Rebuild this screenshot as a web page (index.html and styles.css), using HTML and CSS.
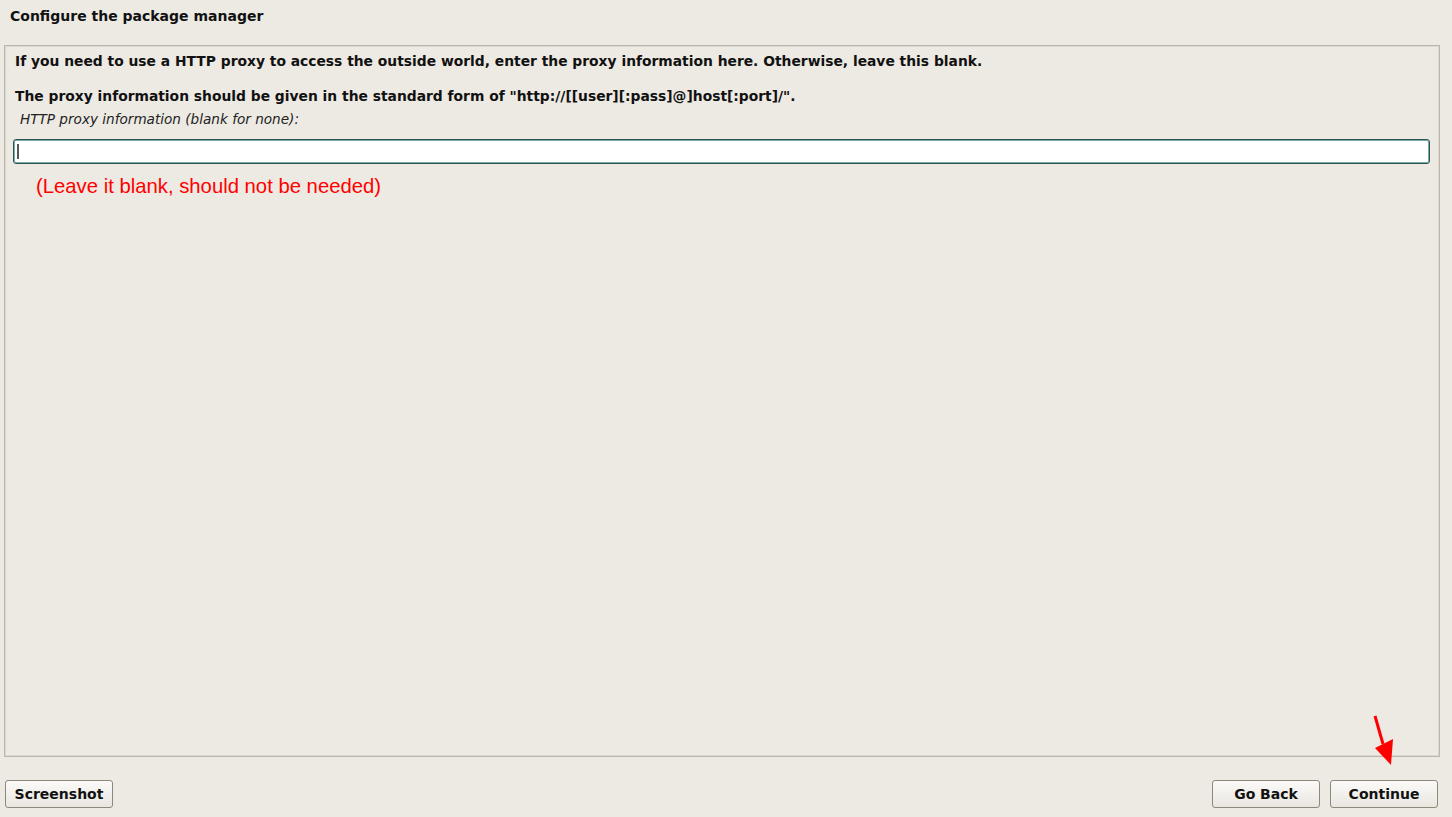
FILE: index.html
```html
<!DOCTYPE html>
<html lang="en">
<head>
    <meta charset="UTF-8">
    <title>Configure the package manager</title>
    <link rel="stylesheet" href="styles.css">
</head>
<body>

    <!-- title -->
    <div class="title">Configure the package manager</div>

    <!-- main panel -->
    <div class="panel">
        <p class="text">If you need to use a HTTP proxy to access the outside world, enter the proxy information here. Otherwise, leave this blank.</p>
        <p class="text second">The proxy information should be given in the standard form of "http://[[user][:pass]@]host[:port]/".</p>
        <div class="label">HTTP proxy information (blank for none):</div>
        <div class="entry"><span class="caret"></span></div>
        <div class="note">(Leave it blank, should not be needed)</div>
    </div>

    <!-- buttons -->
    <div class="footer">
        <button class="btn">Screenshot</button>
        <div class="right">
            <button class="btn">Go Back</button>
            <button class="btn">Continue</button>
        </div>
    </div>

    <!-- annotation arrow -->
    <svg class="arrow" width="40" height="60" viewBox="1360 710 40 60">
        <line x1="1375" y1="716" x2="1383" y2="744" stroke="#ff0000" stroke-width="3"/>
        <polygon points="1375,748 1393,739 1391,765" fill="#ff0000"/>
    </svg>

</body>
</html>
```

FILE: styles.css
```css
body {
    margin: 0;
    width: 1452px;
    height: 817px;
    background-color: #edeae3;
    font-family: "DejaVu Sans", sans-serif;
    color: #111;
    display: flex;
    flex-direction: column;
    overflow: hidden;
}
/* title */
.title {
    font-size: 14px;
    font-weight: bold;
    line-height: 16px;
    padding: 8px 10px 0 10px;
    height: 45px;
    flex-shrink: 0;
    box-sizing: border-box;
}
/* panel */
.panel {
    margin: 0 12px 0 4px;
    height: 712px;
    flex-shrink: 0;
    box-sizing: border-box;
    border: 1px solid #bdb6ab;
    box-shadow: inset 0 0 0 1px #ddd8cf;
    padding: 7px 9px 0 8px;
}
.text {
    margin: 0;
    padding-left: 2px;
    font-size: 13.85px;
    font-weight: bold;
    line-height: 16px;
}
.second {
    margin-top: 19px;
}
.label {
    padding-left: 7px;
    margin-top: 7px;
    font-size: 13.6px;
    font-style: italic;
    line-height: 16px;
    color: #222;
}
.entry {
    margin-top: 12px;
    height: 25px;
    box-sizing: border-box;
    background: #fff;
    border: 1px solid #2c5552;
    box-shadow: inset 0 0 0 1px #78aca7;
    border-radius: 3px;
    display: flex;
    align-items: center;
    padding-left: 3px;
}
.caret {
    width: 2px;
    height: 15px;
    background: #555;
}
.note {
    margin-top: 11px;
    padding-left: 23px;
    font-family: "Liberation Sans", Arial, sans-serif;
    font-size: 20.3px;
    line-height: 22px;
    color: #ff0000;
}
/* footer buttons */
.footer {
    display: flex;
    justify-content: space-between;
    align-items: flex-start;
    padding: 23px 14px 0 5px;
}
.right {
    display: flex;
    gap: 10px;
}
.btn {
    width: 108px;
    height: 28px;
    font-family: "DejaVu Sans", sans-serif;
    font-size: 14px;
    font-weight: bold;
    color: #111;
    background: linear-gradient(#fbfaf8, #e9e6e0);
    border: 1px solid #8e877c;
    border-radius: 3px;
    padding: 0;
}
/* arrow overlay */
.arrow {
    position: absolute;
    left: 1360px;
    top: 710px;
}
```
